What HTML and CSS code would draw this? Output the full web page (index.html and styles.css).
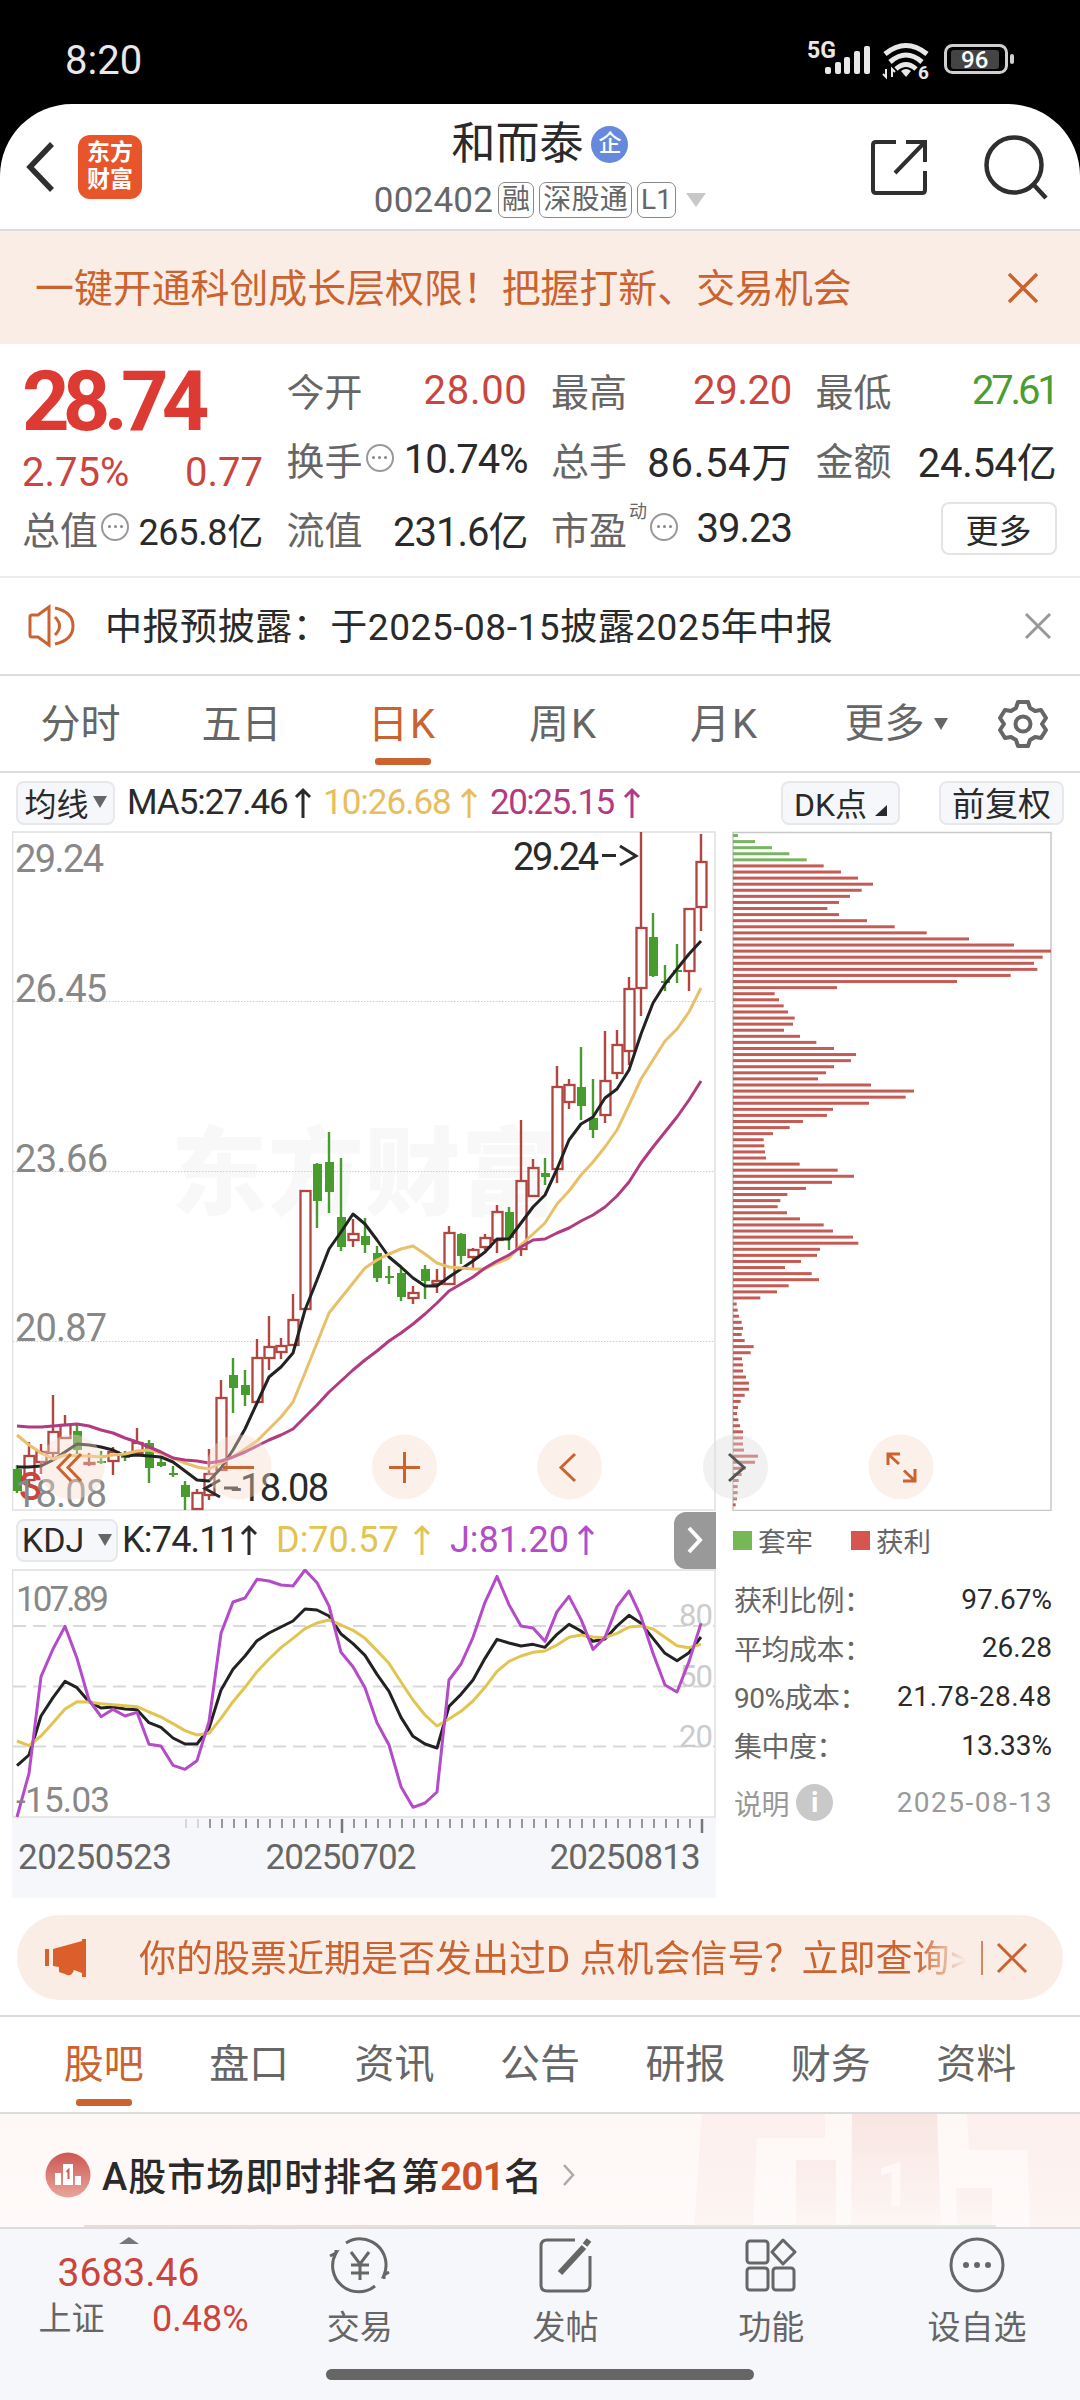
FILE: index.html
```html
<!DOCTYPE html>
<html lang="zh-CN">
<head>
  <meta charset="UTF-8" />
  <meta name="viewport" content="width=device-width, initial-scale=1" />
  <title>和而泰 002402</title>
  <link rel="stylesheet" href="styles.css">
</head>
<body>
  <div class="status">
    <span class="clock">8:20</span>
    <svg class="status-icons" width="210" height="44" viewBox="804 38 210 44">
      <text x="807" y="58" class="net">5G</text>
      <g fill="#e8e8e8">
        <rect x="825" y="67" width="6" height="7" rx="2"/>
        <rect x="835" y="62" width="6" height="12" rx="2"/>
        <rect x="844" y="57" width="6" height="17" rx="2"/>
        <rect x="854" y="51" width="6" height="23" rx="2"/>
        <rect x="864" y="46" width="6" height="28" rx="2"/>
      </g>
      <g fill="none" stroke="#e8e8e8" stroke-width="5">
        <path d="M885 54 Q906 37 927 54"/>
        <path d="M890 62 Q906 48 922 62"/>
        <path d="M896 69 Q906 60 916 69" />
      </g>
      <path d="M901 71 Q906 67 911 71 L906 77Z" fill="#e8e8e8"/>
      <path d="M886 69v8l-3-3M892 77v-8l3 3" fill="none" stroke="#e8e8e8" stroke-width="2"/>
      <text x="918" y="79" class="wifi6">6</text>
      <rect x="945.5" y="45.5" width="61" height="27" rx="7" fill="none" stroke="#cfcfcf" stroke-width="3"/>
      <rect x="951" y="50" width="48" height="19" rx="3" fill="#444"/>
      <rect x="1010" y="54" width="4" height="10" rx="2" fill="#cfcfcf"/>
      <text x="961" y="68" class="battery">96</text>
    </svg>
  </div>

  <div class="app">
    <header class="header">
      <div class="header-left">
        <svg width="30" height="52" viewBox="0 0 30 52"><path d="M26 3L4 26L26 49" fill="none" stroke="#2f2f2f" stroke-width="5.500"/></svg>
        <div class="logo">东方<br>财富</div>
      </div>
      <div class="header-title">
        <h1>和而泰<span class="corp">企</span></h1>
        <div class="code">002402<i>融</i><i>深股通</i><i>L1</i><b class="drop"></b></div>
      </div>
      <div class="header-right">
        <svg width="58" height="58" viewBox="0 0 58 58" fill="none" stroke="#2f2f2f" stroke-width="4">
          <path d="M26 4H6Q3 4 3 7V52Q3 55 6 55H52Q55 55 55 52V33M36 4H55V24M54 5L25 35"/>
        </svg>
        <svg width="66" height="66" viewBox="0 0 66 66" fill="none" stroke="#2f2f2f" stroke-width="4.5">
          <circle cx="30" cy="31" r="27.500"/><path d="M49 50L62 64"/>
        </svg>
      </div>
    </header>

    <div class="promo">
      <span>一键开通科创成长层权限！把握打新、交易机会</span>
      <svg width="34" height="34" viewBox="0 0 34 34"><path d="M3 3L31 31M31 3L3 31" stroke="#cb6330" stroke-width="3.500"/></svg>
    </div>

    <section class="quote">
      <div class="col">
        <div class="price">28.74</div>
        <div class="change"><span>2.75%</span><span>0.77</span></div>
        <div class="cell small"><label>总值</label><b class="dots"></b><span>265.8亿</span></div>
      </div>
      <div class="col">
        <div class="cell"><label>今开</label><span class="up wide">28.00</span></div>
        <div class="cell"><label>换手</label><b class="dots"></b><span class="tight">10.74%</span></div>
        <div class="cell"><label>流值</label><span class="tight">231.6亿</span></div>
      </div>
      <div class="col">
        <div class="cell"><label>最高</label><span class="up">29.20</span></div>
        <div class="cell"><label>总手</label><span class="wide">86.54万</span></div>
        <div class="cell"><label>市盈</label><sup>动</sup><b class="dots"></b><span class="tight">39.23</span></div>
      </div>
      <div class="col">
        <div class="cell"><label>最低</label><span class="down">27.61</span></div>
        <div class="cell"><label>金额</label><span>24.54亿</span></div>
        <div class="cell"><button class="more">更多</button></div>
      </div>
    </section>

    <div class="notice">
      <svg width="50" height="44" viewBox="0 0 50 44" fill="none" stroke="#cb6330" stroke-width="3">
        <path d="M3 13Q3 11 5 11H11L22 3V41L11 33H5Q3 33 3 31Z"/>
        <path d="M28 13Q37 22 28 31M28 4Q46 8 46 22Q46 36 28 40"/>
      </svg>
      <span>中报预披露：于2025-08-15披露2025年中报</span>
      <svg width="28" height="28" viewBox="0 0 28 28"><path d="M2 2L26 26M26 2L2 26" stroke="#999" stroke-width="3"/></svg>
    </div>

    <nav class="periods">
      <a>分时</a><a>五日</a><a class="active k">日K</a><a class="k">周K</a><a class="k">月K</a>
      <a class="more-tab">更多<b class="tri"></b></a>
      <svg class="gear" width="50" height="50" viewBox="0 0 50 50" fill="none" stroke="#666" stroke-width="4" stroke-linejoin="round">
        <path d="M20 3H30L32 9L37 12L43 11L48 19L44 25L48 31L43 39L37 38L32 41L30 47H20L18 41L13 38L7 39L2 31L6 25L2 19L7 11L13 12L18 9Z"/>
        <circle cx="25" cy="25" r="7.500"/>
      </svg>
    </nav>

    <div class="ma">
      <button class="pill">均线<b class="tri"></b></button>
      <span class="ma5">MA5:27.46<svg class="arr" viewBox="0 0 18 32"><path d="M9 31V3M2 10L9 3L16 10"/></svg></span>
      <span class="ma10">10:26.68<svg class="arr" viewBox="0 0 18 32"><path d="M9 31V3M2 10L9 3L16 10"/></svg></span>
      <span class="ma20">20:25.15<svg class="arr" viewBox="0 0 18 32"><path d="M9 31V3M2 10L9 3L16 10"/></svg></span>
      <button class="pill dk">DK点<b class="corner"></b></button>
      <button class="pill fq">前复权</button>
    </div>

    <section class="charts">
      <div class="left">
        <svg class="kline" width="704" height="680" viewBox="12 831 704 680">
          <text class="watermark" x="171" y="1207" textLength="386">东方财富</text>
          <g stroke="#cfcfcf" stroke-width="1" stroke-dasharray="1.500 1.500">
            <path d="M13 1001.500H715M13 1171.500H715M13 1341.500H715"/>
          </g>
          <rect x="12.500" y="832" width="702.500" height="678" fill="none" stroke="#e0e0e0" stroke-width="1.500"/>
          <g id="candles"></g>
          <g id="averages"></g>
          <g class="scale">
            <text x="15" y="872" textLength="89">29.24</text>
            <text x="15" y="1002" textLength="92">26.45</text>
            <text x="15" y="1172" textLength="93">23.66</text>
            <text x="15" y="1341" textLength="92">20.87</text>
          </g>
          <text class="signal" x="19" y="1500">S</text>
          <text class="scale" x="15" y="1507" textLength="92">18.08</text>
          <text class="mark" x="513" y="870" textLength="86">29.24</text>
          <text class="mark" x="231" y="1501" textLength="98">-18.08</text>
          <path d="M602 855.500H616M620 846L636 856L620 865M220 1480L205 1488.500L220 1497" fill="none" stroke="#2a2a2a" stroke-width="3"/>
          <path d="M224 1488H238" stroke="#2a2a2a" stroke-width="3"/>
        </svg>

        <div class="kdj">
          <button class="pill">KDJ<b class="tri"></b></button>
          <span class="k">K:74.11<svg class="arr" viewBox="0 0 18 32"><path d="M9 31V3M2 10L9 3L16 10"/></svg></span>
          <span class="d">D:70.57<svg class="arr" viewBox="0 0 18 32"><path d="M9 31V3M2 10L9 3L16 10"/></svg></span>
          <span class="j">J:81.20<svg class="arr" viewBox="0 0 18 32"><path d="M9 31V3M2 10L9 3L16 10"/></svg></span>
          <div class="next"><svg width="18" height="28" viewBox="0 0 18 28"><path d="M3 2L14 14L3 26" fill="none" stroke="#fff" stroke-width="4"/></svg></div>
        </div>

        <svg class="osc" width="704" height="249" viewBox="12 1569 704 249">
          <path d="M13 1626H715M13 1686.500H715M13 1746.500H715" stroke="#d9d9d9" stroke-width="2" stroke-dasharray="13 7"/>
          <rect x="12.500" y="1570" width="702.500" height="247" fill="none" stroke="#e0e0e0" stroke-width="1.500"/>
          <g class="level">
            <text x="679" y="1626" textLength="34">80</text>
            <text x="679" y="1687" textLength="34">50</text>
            <text x="679" y="1747" textLength="34">20</text>
          </g>
          <g id="kdjLines"></g>
          <g class="scale kdj-scale">
            <text x="16" y="1611" textLength="93">107.89</text>
            <text x="16" y="1812" textLength="94">-15.03</text>
          </g>
        </svg>

        <div class="axis">
          <svg id="ticks" width="704" height="16" viewBox="12 1818 704 16"></svg>
          <div class="dates"><span>20250523</span><span>20250702</span><span>20250813</span></div>
        </div>
      </div>

      <div class="right">
        <svg class="chips" width="320" height="680" viewBox="732 831 320 680">
          <rect x="733" y="832.500" width="318" height="678" fill="none" stroke="#c8c8c8" stroke-width="1.500"/>
          <g id="chipBars"></g>
        </svg>
        <div class="legend"><b class="lg"></b><span>套牢</span><b class="lr"></b><span>获利</span></div>
        <dl class="stats">
          <div><dt>获利比例：</dt><dd>97.67%</dd></div>
          <div><dt>平均成本：</dt><dd>26.28</dd></div>
          <div><dt>90%成本：</dt><dd class="range">21.78-28.48</dd></div>
          <div><dt>集中度：</dt><dd>13.33%</dd></div>
          <div class="info"><dt>说明<b>i</b></dt><dd>2025-08-13</dd></div>
        </dl>
      </div>

      <!-- chart controls float over both panels -->
      <svg class="controls" width="900" height="66" viewBox="38 1434 900 66" fill="none" stroke="#cb6330" stroke-width="3">
        <g fill="#f6dccb" fill-opacity="0.400" stroke="none">
          <circle cx="72" cy="1467" r="32.500"/><circle cx="239" cy="1467" r="32.500"/>
          <circle cx="404.500" cy="1467" r="32.500"/><circle cx="569.500" cy="1467" r="32.500"/>
          <circle cx="901" cy="1467" r="32.500"/>
        </g>
        <circle cx="735.500" cy="1467" r="32.500" fill="#ddd" fill-opacity="0.400" stroke="none"/>
        <path d="M71 1454L58 1467.500L71 1481M81 1454L68 1467.500L81 1481"/>
        <path d="M223 1467.500H254"/>
        <path d="M389 1467.500H420M404.500 1452V1483"/>
        <path d="M575 1454L561 1467.500L575 1481"/>
        <path d="M729 1454L744 1467.500L729 1481" stroke="#555"/>
        <path d="M888 1465V1454H900M888 1454L899 1464M915 1469V1481H903M915 1481L904 1470.500"/>
      </svg>
    </section>

    <div class="tip">
      <svg width="44" height="40" viewBox="0 0 44 40" fill="#db5f2a">
        <path d="M1 11H5V28H1ZM9 11L38 3V1H42V39H38V35L30 32Q27 40 21 36L15 34V29L9 28Z"/>
      </svg>
      <span>你的股票近期是否发出过D 点机会信号？立即查询&gt;</span>
      <svg width="50" height="36" viewBox="0 0 50 36" fill="none" stroke="#cb6330">
        <path d="M2 1V35" stroke-width="1.500"/><path d="M18 4L46 32M46 4L18 32" stroke-width="3"/>
      </svg>
    </div>

    <nav class="sections">
      <a class="active">股吧</a><a>盘口</a><a>资讯</a><a>公告</a><a>研报</a><a>财务</a><a>资料</a>
    </nav>

    <section class="rank">
      <svg class="rank-icon" width="46" height="46" viewBox="0 0 46 46">
        <defs><linearGradient id="rg" x2="0" y2="1"><stop stop-color="#cb5852"/><stop offset="1" stop-color="#e9a59b"/></linearGradient></defs>
        <circle cx="23" cy="23" r="22.500" fill="url(#rg)"/>
        <path d="M10 21H16V33H10ZM18 12H28V33H18ZM30 24H36V33H30Z" fill="#fff"/>
        <path d="M21.500 20L23.500 18V27" fill="none" stroke="#c9635c" stroke-width="2"/>
      </svg>
      <span class="rank-text">A股市场即时排名第<em>201</em>名</span>
      <svg width="14" height="24" viewBox="0 0 14 24"><path d="M2 2L11 12L2 22" fill="none" stroke="#aaa" stroke-width="2.500"/></svg>
      <svg class="rank-art" width="390" height="114" viewBox="690 0 390 114">
        <defs>
          <linearGradient id="fade" x2="0" y2="1"><stop stop-color="#f8e5e2"/><stop offset="1" stop-color="#fdf7f5"/></linearGradient>
          <linearGradient id="fade2" x2="0" y2="1"><stop stop-color="#fcefed"/><stop offset="1" stop-color="#fdf5f3"/></linearGradient>
        </defs>
        <path d="M702 0H825V24H757L753 114H694ZM967 0H1080V114H1030L1027 36H969Z" fill="url(#fade2)"/>
        <path d="M796 46H836V114H796ZM852 0H937L941 114H851ZM956 74H992V114H957Z" fill="url(#fade)"/>
        <text x="876" y="92">1</text>
      </svg>
      <div class="rank-line"></div>
    </section>

    <footer class="bottom">
      <div class="index">
        <b class="tri-up"></b>
        <div class="index-value">3683.46</div>
        <div class="index-row"><label>上证</label><span>0.48%</span></div>
      </div>
      <a>
        <svg width="62" height="58" viewBox="0 0 62 58" fill="none" stroke="#666" stroke-width="3">
          <path d="M17 7A26 26 0 0 1 55 39L60 36M55 39V43M46 50A26 26 0 0 1 7 17L1 20M7 17V14"/>
          <path d="M22 16L31 28L40 16M31 28V44M22 29H40M22 37H40"/>
        </svg>交易
      </a>
      <a>
        <svg width="54" height="56" viewBox="0 0 54 56" fill="none" stroke="#666" stroke-width="3">
          <path d="M36 3H8Q2 3 2 9V48Q2 54 8 54H45Q51 54 51 48V19"/>
          <path d="M21 36L45 10" stroke-width="6"/><path d="M46 8L50 3" stroke-width="6"/>
        </svg>发帖
      </a>
      <a>
        <svg width="52" height="54" viewBox="0 0 52 54" fill="none" stroke="#666" stroke-width="3">
          <rect x="2" y="3" width="21" height="22" rx="3"/><rect x="2" y="30" width="21" height="22" rx="3"/>
          <rect x="28" y="30" width="21" height="22" rx="3"/><path d="M38 2L50 14L38 26L27 14Z" stroke-linejoin="round"/>
        </svg>功能
      </a>
      <a>
        <svg width="56" height="58" viewBox="0 0 56 58" fill="none" stroke="#666" stroke-width="3">
          <circle cx="28" cy="29" r="26"/>
          <g fill="#666" stroke="none"><circle cx="17" cy="29" r="3"/><circle cx="28" cy="29" r="3"/><circle cx="39" cy="29" r="3"/></g>
        </svg>设自选
      </a>
      <div class="home"></div>
    </footer>
  </div>

  <script src="chart.js"></script>
</body>
</html>
```
FILE: styles.css
```css
* {
  box-sizing: border-box;
}
body {
  margin: 0;
  width: 1080px;
  height: 2400px;
  overflow: hidden;
  background: #000;
  color: #2a2a2a;
  font-family: Roboto, "Noto Sans CJK SC", sans-serif;
}
button {
  font-family: inherit;
  color: inherit;
  padding: 0;
}
svg {
  display: block;
  flex: none;
}

.status {
  height: 104px;
  padding: 16px 66px 0 65px;
  display: flex;
  justify-content: space-between;
  align-items: center;
  color: #e8e8e8;
}
.clock { font-size: 40px; }
.net { font-size: 23px; font-weight: 700; fill: #e8e8e8; }
.wifi6 { font-size: 19px; font-weight: 700; fill: #e8e8e8; }
.battery { font-size: 24px; font-weight: 500; fill: #fff; }

.app {
  height: 2296px;
  background: #fff;
  border-radius: 72px 72px 0 0;
  overflow: hidden;
}

.header {
  height: 127px;
  display: grid;
  grid-template-columns: 1fr auto 1fr;
  border-bottom: 2px solid #dcdcdc;
}
.header-left {
  display: flex;
  align-items: center;
  padding-left: 26px;
  gap: 22px;
}
.logo {
  width: 64px;
  height: 64px;
  border-radius: 12px;
  background: #e9552a;
  color: #fff;
  font-size: 23px;
  font-weight: 700;
  line-height: 27px;
  padding-top: 4px;
  text-align: center;
}
.header-title {
  display: flex;
  flex-direction: column;
  align-items: center;
  padding-top: 13px;
}
h1 {
  margin: 0;
  font-size: 44px;
  font-weight: 400;
  line-height: 54px;
  display: flex;
  align-items: center;
  gap: 8px;
}
.corp {
  width: 37px;
  height: 37px;
  border-radius: 50%;
  background: #6688dd;
  color: #fff;
  font-size: 23px;
  font-weight: 500;
  line-height: 36px;
  text-align: center;
}
.code {
  display: flex;
  align-items: center;
  height: 58px;
  gap: 5px;
  font-size: 35px;
  letter-spacing: 0.200px;
  color: #666;
}
.code i {
  font-style: normal;
  font-size: 28px;
  line-height: 34px;
  padding: 0 3px;
  border: 1.5px solid #888;
  border-radius: 7px;
}
.drop {
  margin-left: 5px;
  border: 10px solid transparent;
  border-top: 14px solid #c8c8c8;
  border-bottom: 0;
}
.header-right {
  display: flex;
  align-items: center;
  justify-content: flex-end;
  gap: 56px;
  padding-right: 30px;
}

.promo {
  height: 113px;
  background: #faede5;
  color: #cb6330;
  display: flex;
  align-items: center;
  justify-content: space-between;
  padding: 0 40px 0 35px;
  font-size: 38.9px;
}
.promo span { padding-bottom: 5px; }

.quote {
  height: 234px;
  padding: 12px 23px 0 24px;
  display: grid;
  grid-template-columns: repeat(4, 239px);
  gap: 25.500px;
  border-bottom: 2px solid #ececec;
}
.price {
  height: 90px;
  margin-left: -2px;
  line-height: 92px;
  font-size: 83px;
  font-weight: 700;
  letter-spacing: -6.800px;
  color: #dc3a32;
}
.change {
  height: 48px;
  line-height: 53px;
  margin-left: -2px;
  display: flex;
  justify-content: space-between;
  font-size: 40px;
  color: #c9453e;
}
.cell {
  height: 69px;
  display: flex;
  align-items: center;
  font-size: 40px;
  white-space: nowrap;
}
.cell label {
  font-size: 38px;
  margin: -3px 0 0 -2px;
  color: #666;
}
.cell span {
  margin-left: auto;
  letter-spacing: -0.300px;
}
.cell .tight { letter-spacing: -1px; }
.cell .wide { letter-spacing: 0.700px; }
.small span { font-size: 36px; }
.up { color: #c9453e; }
.cell .down { color: #4a9e2f; letter-spacing: -3.200px; }
.dots {
  position: relative;
  width: 28px;
  height: 28px;
  margin: 0 0 4px 3px;
  border: 2px solid #999;
  border-radius: 50%;
}
.dots::after {
  content: "";
  position: absolute;
  left: 10.500px;
  top: 10.500px;
  width: 3px;
  height: 3px;
  border-radius: 50%;
  background: #888;
  box-shadow: -6px 0 #888, 6px 0 #888;
}
sup {
  font-size: 18px;
  color: #666;
  margin: 0 0 34px 2px;
  line-height: 20px;
}
.more {
  margin-left: auto;
  width: 116px;
  height: 53px;
  border: 2px solid #e4e4e4;
  border-radius: 8px;
  background: #fff;
  font-size: 33px;
}

.notice {
  height: 98px;
  display: flex;
  align-items: center;
  padding: 0 28px 0 27px;
  border-bottom: 2px solid #dcdcdc;
  font-size: 37px;
}
.notice span {
  flex: 1;
  margin-left: 28px;
  padding-bottom: 4px;
  letter-spacing: 0.550px;
}

.periods {
  height: 97px;
  display: flex;
  align-items: center;
  border-bottom: 2px solid #dcdcdc;
  font-size: 40px;
  color: #666;
}
.periods a {
  width: 161px;
  height: 95px;
  line-height: 97px;
  text-align: center;
  position: relative;
}
.periods .k { letter-spacing: 2px; }
.periods .more-tab {
  width: 182px;
  display: flex;
  align-items: center;
  justify-content: center;
  gap: 9px;
}
.active { color: #cb6330; }
.periods .active::after,
.sections .active::after {
  content: "";
  position: absolute;
  left: 50%;
  bottom: 6px;
  width: 56px;
  height: 7px;
  margin-left: -28px;
  border-radius: 3px;
  background: #cb6330;
}
.tri {
  border: 7px solid transparent;
  border-top: 12px solid #666;
  border-bottom: 0;
}
.gear { margin-left: 11px; }

.ma, .kdj {
  display: flex;
  align-items: center;
  font-size: 35px;
  white-space: nowrap;
}
.ma {
  height: 59px;
  padding-left: 16px;
}
.ma span, .kdj span {
  display: flex;
  align-items: center;
  justify-content: space-between;
}
.arr {
  width: 18px;
  height: 32px;
  fill: none;
  stroke: currentColor;
  stroke-width: 3;
}
.pill {
  height: 44px;
  display: flex;
  align-items: center;
  justify-content: center;
  background: #f6f7fa;
  border: 2px solid #e6e8ec;
  border-radius: 8px;
  font-size: 32px;
}
.ma .pill { width: 99px; gap: 4px; padding-bottom: 2px; }
.ma5 { width: 185px; margin-left: 12px; letter-spacing: -1px; }
.ma10 { width: 155px; margin-left: 11px; color: #e8bd60; letter-spacing: -1px; }
.ma20 { width: 151px; margin-left: 12px; color: #b23a80; letter-spacing: -1.500px; }
.ma .dk { width: 119px; margin-left: 140px; gap: 8px; }
.ma .fq { width: 125px; margin-left: 39px; font-size: 33px; }
.corner {
  margin-top: 18px;
  border-left: 12px solid transparent;
  border-bottom: 11px solid #2a2a2a;
}

.charts {
  height: 1084px;
  margin-top: -1px;
  padding-left: 12px;
  display: flex;
  gap: 16px;
  position: relative;
}
.left { width: 704px; }
.right { width: 320px; }
.watermark { font-size: 96px; font-weight: 900; fill: #f8f8f8; }
.scale { font-size: 38px; fill: #888; }
.kdj-scale { font-size: 35px; }
.level { font-size: 31px; fill: #ccc; }
.mark { font-size: 38px; fill: #2a2a2a; }
.signal { font-size: 38px; font-weight: 500; fill: #c9453e; }
polyline {
  fill: none;
  stroke-width: 3;
  stroke-linejoin: round;
}

.kdj {
  height: 58px;
  padding-left: 4px;
  font-size: 36px;
}
.kdj .pill { width: 102px; height: 43px; gap: 14px; font-size: 34px; }
.kdj .k { width: 136px; margin-left: 4px; letter-spacing: -0.800px; }
.kdj .d { width: 155px; margin-left: 18px; color: #e2c450; }
.kdj .j { width: 145px; margin-left: 19px; color: #b44bc8; }
.next {
  width: 42px;
  height: 57px;
  margin-left: auto;
  display: flex;
  align-items: center;
  justify-content: center;
  background: #999;
  border-radius: 12px 0 0 12px;
}
.axis {
  height: 80px;
  background: #f6f7fa;
}
.dates {
  display: flex;
  padding: 2px 0 0 6px;
  font-size: 35px;
  line-height: 44px;
  letter-spacing: -0.500px;
  color: #666;
}
.dates span + span { margin-left: 94px; letter-spacing: -0.900px; }
.dates span:last-child { margin-left: 134px; }

.legend {
  height: 58px;
  display: flex;
  align-items: center;
  font-size: 27.500px;
  color: #666;
}
.legend b {
  width: 19px;
  height: 19px;
  margin: 0 6px 0 1px;
}
.legend .lg { background: #76b855; }
.legend .lr { background: #d6554f; margin-left: 38px; }
.stats {
  margin: 6px 0 0;
  padding-left: 2px;
  font-size: 28px;
}
.stats div {
  height: 48.600px;
  display: flex;
  align-items: center;
  justify-content: space-between;
}
.stats dt { color: #666; white-space: nowrap; letter-spacing: -0.500px; }
.stats dd { margin: 0; }
.stats .range { letter-spacing: 0.600px; }
.stats .info { margin-top: 9px; }
.info dt, .stats .info dd { color: #999; }
.stats .info dd { letter-spacing: 1.500px; margin-right: -1px; }
.info dt { display: flex; align-items: center; gap: 7px; }
.info b {
  width: 37px;
  height: 37px;
  border-radius: 50%;
  background: #c9c9c9;
  color: #fff;
  text-align: center;
  line-height: 37px;
}
.controls {
  position: absolute;
  left: 38px;
  top: 603px;
}

.tip {
  height: 85px;
  margin: 0 17px;
  padding: 0 33px 0 27px;
  border-radius: 43px;
  background: #faede5;
  color: #cb6330;
  font-size: 37px;
  display: flex;
  align-items: center;
}
.tip span {
  width: 827px;
  margin: 0 auto 0 51px;
  padding-bottom: 4px;
  overflow: hidden;
  white-space: nowrap;
  -webkit-mask-image: linear-gradient(90deg, #000 94%, transparent);
  mask-image: linear-gradient(90deg, #000 94%, transparent);
}

.sections {
  height: 99px;
  margin-top: 15px;
  padding: 0 31px;
  display: flex;
  border-top: 2px solid #dcdcdc;
  border-bottom: 2px solid #dcdcdc;
  font-size: 40px;
  color: #666;
}
.sections a {
  flex: 1;
  line-height: 96px;
  text-align: center;
  position: relative;
}

.rank {
  height: 113px;
  padding: 8px 0 0 45px;
  display: flex;
  align-items: center;
  background: linear-gradient(#fdf7f5, #fffbfa);
  position: relative;
}
.rank-text {
  margin: 0 19px 0 11px;
  padding-bottom: 2px;
  font-size: 38px;
  font-weight: 500;
  letter-spacing: 1px;
  z-index: 1;
}
.rank-text em {
  font-style: normal;
  font-weight: 700;
  color: #cf5128;
  letter-spacing: -0.500px;
}
.rank-art {
  position: absolute;
  right: 0;
  top: 0;
}
.rank-art text { font-size: 62px; font-weight: 700; fill: #fff8f7; }
.rank-line {
  position: absolute;
  left: 84px;
  right: 84px;
  bottom: 0;
  height: 2px;
  background: linear-gradient(90deg, #eedad8, #dfe9e0);
}

.bottom {
  height: 173px;
  display: flex;
  position: relative;
  background: #f6f7fa;
  border-top: 2px solid #dcdcdc;
  color: #666;
}
.index {
  width: 257px;
  display: flex;
  flex-direction: column;
  align-items: center;
}
.tri-up {
  margin-top: 8px;
  border: 10px solid transparent;
  border-bottom: 7px solid #777;
  border-top: 0;
}
.index-value {
  margin-top: 7px;
  font-size: 39px;
  line-height: 44px;
  color: #c9453e;
}
.index-row {
  width: 210px;
  margin: 2px 0 0 30px;
  display: flex;
  justify-content: space-between;
  align-items: center;
  font-size: 36px;
  line-height: 44px;
}
.index-row label { font-size: 33px; }
.index-row span { color: #c9453e; }
.bottom a {
  width: 205.700px;
  padding-top: 7px;
  display: flex;
  flex-direction: column;
  align-items: center;
  font-size: 33px;
  line-height: 44px;
}
.bottom a svg { height: 58px; margin-bottom: 12px; }
.home {
  position: absolute;
  left: 326px;
  top: 140px;
  width: 428px;
  height: 11px;
  border-radius: 6px;
  background: #666;
}
```
FILE: chart.js
```js
const NS = 'http://www.w3.org/2000/svg';
const RED = '#b0463f';
const GREEN = '#489c2e';
const xAt = i => 17 + 12 * i;

function add(parent, tag, attrs) {
  const el = document.createElementNS(NS, tag);
  for (const k in attrs) el.setAttribute(k, attrs[k]);
  document.getElementById(parent).appendChild(el);
}

function line(parent, ys, color) {
  add(parent, 'polyline', { points: ys.map((y, i) => xAt(i) + ',' + y).join(' '), stroke: color });
}

// [up, high, body top, body bottom, low]
const candles = [
  [0,1465,1469,1491,1493],[1,1442,1456,1480,1486],[1,1444,1452,1462,1474],[1,1395,1432,1453,1458],
  [1,1415,1425,1438,1439],[0,1425,1431,1450,1454],[1,1453,1463,1464,1466],[0,1451,1461,1463,1464],
  [1,1447,1452,1461,1475],[0,1451,1456,1457,1461],[1,1428,1443,1453,1454],[0,1440,1443,1468,1483],
  [0,1458,1462,1466,1467],[0,1466,1473,1475,1477],[0,1481,1485,1497,1510],[1,1489,1493,1509,1510],
  [1,1449,1474,1495,1500],[1,1380,1398,1470,1470],[0,1358,1375,1388,1413],[0,1370,1385,1395,1406],
  [1,1339,1358,1402,1402],[1,1316,1347,1358,1370],[1,1338,1346,1352,1359],[1,1294,1320,1345,1345],
  [1,1191,1191,1309,1309],[0,1163,1164,1201,1228],[0,1132,1162,1192,1213],[0,1158,1217,1247,1251],
  [1,1219,1234,1240,1247],[0,1218,1236,1245,1253],[0,1246,1253,1278,1282],[0,1266,1276,1277,1284],
  [0,1268,1273,1297,1301],[1,1286,1293,1298,1304],[0,1265,1269,1281,1299],[1,1269,1281,1284,1293],
  [1,1226,1233,1284,1284],[0,1233,1234,1256,1264],[1,1248,1250,1257,1268],[1,1234,1238,1247,1250],
  [1,1205,1212,1240,1253],[0,1207,1212,1238,1250],[1,1120,1181,1249,1256],[1,1159,1168,1196,1196],
  [0,1158,1173,1177,1185],[1,1066,1087,1169,1183],[1,1079,1085,1102,1109],[0,1047,1087,1106,1120],
  [0,1079,1118,1130,1138],[1,1031,1081,1115,1123],[1,1030,1045,1073,1079],[1,977,989,1051,1065],
  [1,832,928,988,1016],[0,913,937,976,977],[0,965,981,982,991],[0,944,970,971,983],
  [1,909,909,971,991],[1,834,862,907,931]
];
candles.forEach(([up, high, top, bottom, low], i) => {
  const x = xAt(i);
  const c = up ? RED : GREEN;
  add('candles', 'path', { d: `M${x} ${high}V${top}M${x} ${bottom}V${low}`, stroke: c, 'stroke-width': 2.4 });
  if (up) {
    add('candles', 'rect', { x: x - 4.5, y: top, width: 10, height: bottom - top, fill: 'none', stroke: c, 'stroke-width': 2.3 });
  } else {
    add('candles', 'rect', { x: x - 4, y: top, width: 9, height: Math.max(2, bottom - top), fill: c });
  }
});

line('averages', [1467,1467,1466,1460,1452,1444,1445,1447,1450,1456,1455,1456,1457,1462,1471,1480,1481,1468,1450,1429,1403,1377,1367,1353,1310,1280,1249,1232,1214,1224,1240,1257,1267,1278,1286,1286,1277,1269,1261,1252,1239,1239,1223,1207,1195,1169,1140,1124,1117,1098,1089,1070,1034,1003,984,969,954,941], '#222');
line('averages', [1435,1445,1453,1459,1455,1456,1456,1457,1455,1454,1451,1450,1453,1458,1463,1467,1469,1463,1457,1449,1441,1429,1417,1402,1373,1343,1313,1298,1283,1268,1260,1254,1249,1246,1254,1263,1267,1268,1269,1269,1263,1258,1245,1234,1223,1204,1191,1175,1162,1147,1130,1105,1079,1060,1041,1029,1012,988], '#e8c069');
line('averages', [1426,1427,1427,1426,1425,1424,1426,1430,1433,1438,1442,1447,1452,1458,1460,1461,1463,1461,1457,1452,1446,1440,1435,1429,1417,1405,1392,1381,1370,1360,1351,1341,1333,1324,1314,1303,1291,1284,1277,1268,1261,1255,1247,1240,1239,1233,1228,1221,1215,1207,1196,1182,1163,1147,1132,1117,1100,1081], '#b23a80');

// oscillator values are stored in thirds of a pixel below y = 1500
const kdj = {
  '#222': [797,765,648,593,544,563,605,624,621,627,629,668,682,714,732,732,685,570,508,468,422,399,381,363,327,330,348,402,431,466,523,574,652,709,732,744,619,583,540,475,418,429,438,433,442,403,373,393,424,417,378,346,370,415,460,482,458,411],
  '#e2c450': [723,737,708,668,627,605,606,611,614,617,620,636,651,671,692,705,700,655,605,562,515,477,443,415,386,369,360,375,391,415,452,490,546,600,645,678,657,634,603,562,514,484,468,457,453,435,412,405,411,413,400,381,378,387,412,437,443,433],
  '#b44bc8': [951,820,530,447,379,475,600,650,628,648,637,733,738,796,808,782,665,400,306,294,238,243,255,258,210,248,318,457,500,563,668,735,860,922,909,876,540,492,412,307,229,314,378,384,424,335,289,358,448,412,320,273,350,460,555,576,485,370]
};
for (const color in kdj) line('kdjLines', kdj[color].map(v => 1500 + v / 3), color);

for (let i = 14; i < 58; i++) {
  const major = i === 27 || i === 57;
  add('ticks', 'path', {
    d: `M${xAt(i) + 1} 1819V${major ? 1833 : 1828}`,
    stroke: i < 16 ? '#ccc' : '#777',
    'stroke-width': major ? 2.5 : 1.5
  });
}

// chip distribution, one bar per price step, width in thirds of a pixel
const chips = [54,105,156,208,260,311,363,414,459,425,390,357,322,357,441,524,620,747,882,993,968,942,952,872,711,351,164,177,191,204,224,219,192,240,289,342,408,393,342,318,294,453,582,557,447,339,321,249,209,159,131,133,135,138,239,353,402,336,258,202,181,173,201,240,311,339,399,415,300,291,243,195,275,297,206,171,121,50,53,57,65,69,65,74,101,92,66,69,69,78,87,87,74,62,54,51,55,60,69,69,69,72,114,105,77,65,56,53,53,51,47];
chips.forEach((v, i) => {
  add('chipBars', 'rect', {
    x: 733, y: 834 + i * 6.085, width: (v - 39) / 3, height: 3,
    fill: i < 5 ? '#7ab463' : '#c45c56'
  });
});
```
